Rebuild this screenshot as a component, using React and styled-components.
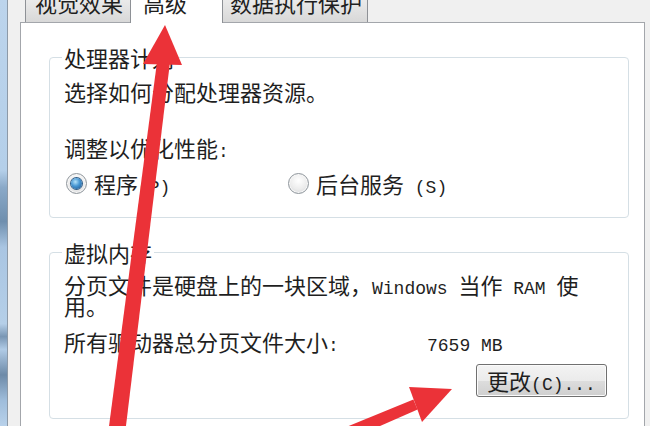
import React from "react";
import styled, { createGlobalStyle } from "styled-components";

const GlobalStyle = createGlobalStyle`
  html, body {
    margin: 0;
    padding: 0;
    background: #f0f0f0;
  }
`;

const Screen = styled.div`
  position: relative;
  display: flex;
  width: 650px;
  height: 426px;
  overflow: hidden;
  background: #f0f0f0;
  color: #1f1f1f;
  font-family: "Noto Sans CJK SC", "Noto Sans", sans-serif;
  font-size: 22px;
`;

// strip of the desktop window frame on the far left
const FrameEdge = styled.div`
  flex: none;
  width: 7px;
  border-right: 1px solid #8d9aa8;
  background: linear-gradient(
    180deg,
    #bcd4ec 0%,
    #b4cfe9 40%,
    #8aa9c8 44%,
    #6f8fae 52%,
    #a9c5e2 58%,
    #b5cfe8 76%,
    #7996b4 79%,
    #b0cbe6 82%,
    #6d8aa8 88%,
    #9fbddb 94%,
    #b8d1ea 100%
  );
`;

const Dialog = styled.div`
  flex: 1;
  min-width: 0;
  display: flex;
  flex-direction: column;
  padding-left: 12px;
`;

const TabStrip = styled.div`
  position: relative;
  z-index: 1;
  flex: none;
  display: flex;
  align-items: flex-end;
  height: 22px;
  padding-left: 6px;
`;

const Tab = styled.div`
  box-sizing: border-box;
  flex: none;
  width: ${(p) => p.$width}px;
  height: ${(p) => (p.$active ? 35 : 34)}px;
  margin-left: -1px;
  margin-bottom: ${(p) => (p.$active ? -1 : 0)}px;
  padding-left: ${(p) => p.$indent}px;
  border: 1px solid #8e9196;
  border-bottom: none;
  background: ${(p) =>
    p.$active ? "#ffffff" : "linear-gradient(180deg, #f3f3f3, #d8d8d8)"};
  line-height: 27px;
  white-space: nowrap;
`;

const Page = styled.div`
  flex: 1;
  margin-right: 5px;
  padding: 0 15px 0 28px;
  background: #ffffff;
  border: 1px solid #a3a6ab;
  border-bottom: none;
`;

const GroupBox = styled.fieldset`
  min-width: 0;
  margin: 23px 0 0;
  padding: ${(p) => p.$top}px 21px ${(p) => p.$bottom}px 14px;
  border: 1px solid #d5dfe5;
  border-radius: 4px;
`;

const GroupTitle = styled.legend`
  margin-left: -2px;
  padding: 0 2px;
  line-height: 22px;
`;

const Line = styled.p`
  margin: ${(p) => p.$gap || 0}px 0 0;
  line-height: ${(p) => p.$lh || 22}px;
`;

// half-width latin runs; zero line-height keeps them from growing the line
const Latin = styled.span`
  font-family: "Liberation Mono", monospace;
  font-size: 18px;
  line-height: 0;
  white-space: pre;
`;

const RadioRow = styled.div`
  display: grid;
  grid-template-columns: 222px auto;
  margin-top: 14px;
  height: 22px;
`;

const Option = styled.label`
  display: flex;
  align-items: center;
  gap: 7px;
  padding-left: 2px;
  line-height: 22px;
`;

const Radio = styled.span`
  box-sizing: border-box;
  flex: none;
  display: flex;
  align-items: center;
  justify-content: center;
  width: 21px;
  height: 21px;
  border-radius: 50%;
  border: 1px solid #8f969c;
  background: radial-gradient(
    circle at 50% 35%,
    #ffffff 0%,
    #ececec 55%,
    #cdd0d3 100%
  );
  box-shadow: inset 0 0 0 1px #f7f7f7;

  &::after {
    content: "";
    display: ${(p) => (p.$checked ? "block" : "none")};
    width: 11px;
    height: 11px;
    border-radius: 50%;
    background: radial-gradient(
      circle at 40% 35%,
      #b4e2fa 0%,
      #4595d2 45%,
      #1d4f86 100%
    );
    box-shadow: 0 0 0 1px #2f5c86;
  }
`;

const SizeRow = styled.div`
  display: flex;
  margin-top: 14px;
  line-height: 22px;
`;

const SizeLabel = styled.span`
  flex: none;
  width: 363px;
`;

const SizeValue = styled.span`
  flex: none;
`;

const ButtonRow = styled.div`
  display: flex;
  justify-content: flex-end;
  margin-top: 12px;
`;

const Button = styled.button`
  box-sizing: border-box;
  display: block;
  width: 131px;
  height: 33px;
  padding: 0;
  border: 1px solid #707070;
  border-radius: 3px;
  background: linear-gradient(
    180deg,
    #f3f3f3 0%,
    #ebebeb 50%,
    #dddddd 51%,
    #cfcfcf 100%
  );
  box-shadow: inset 0 0 0 1px #fbfbfb;
  color: #1f1f1f;
  font-family: inherit;
  font-size: 22px;
  line-height: 31px;
  text-align: center;
`;

// red hand-drawn pointers laid over the dialog
const Overlay = styled.svg`
  position: absolute;
  left: 0;
  top: 0;
  width: 650px;
  height: 426px;
  pointer-events: none;
`;

const tabs = [
  { label: "视觉效果", width: 106, indent: 9 },
  { label: "高级", width: 93, indent: 12, active: true },
  { label: "数据执行保护", width: 146, indent: 7 },
];

export default function App() {
  return (
    <Screen>
      <GlobalStyle />
      <FrameEdge />
      <Dialog>
        <TabStrip>
          {tabs.map((t) => (
            <Tab
              key={t.label}
              $width={t.width}
              $indent={t.indent}
              $active={t.active}
            >
              {t.label}
            </Tab>
          ))}
        </TabStrip>
        <Page>
          <GroupBox $top={12} $bottom={23}>
            <GroupTitle>处理器计划</GroupTitle>
            <Line>选择如何分配处理器资源。</Line>
            <Line $gap={34}>
              调整以优化性能<Latin>:</Latin>
            </Line>
            <RadioRow>
              <Option>
                <Radio $checked />
                <span>
                  程序<Latin>(P)</Latin>
                </span>
              </Option>
              <Option>
                <Radio />
                <span>
                  后台服务<Latin> (S)</Latin>
                </span>
              </Option>
            </RadioRow>
          </GroupBox>

          <GroupBox $top={11} $bottom={21}>
            <GroupTitle>虚拟内存</GroupTitle>
            <Line $lh={21}>
              分页文件是硬盘上的一块区域，<Latin>Windows </Latin>当作
              <Latin> RAM </Latin>使
              <br />
              用。
            </Line>
            <SizeRow>
              <SizeLabel>
                所有驱动器总分页文件大小<Latin>:</Latin>
              </SizeLabel>
              <SizeValue>
                <Latin>7659 MB</Latin>
              </SizeValue>
            </SizeRow>
            <ButtonRow>
              <Button>
                更改<Latin>(C)...</Latin>
              </Button>
            </ButtonRow>
          </GroupBox>
        </Page>
      </Dialog>

      <Overlay viewBox="0 0 650 426">
        <g fill="#eb3238">
          <polygon points="165,25 182,65 143,64" />
          <polygon points="157,62 170,62 125.5,430 108.5,430" />
          <polygon points="452,389 422,422 409,387" />
          <polygon points="413.4,399.4 417.6,409.6 335.2,445.6 330.2,433.6" />
        </g>
      </Overlay>
    </Screen>
  );
}
